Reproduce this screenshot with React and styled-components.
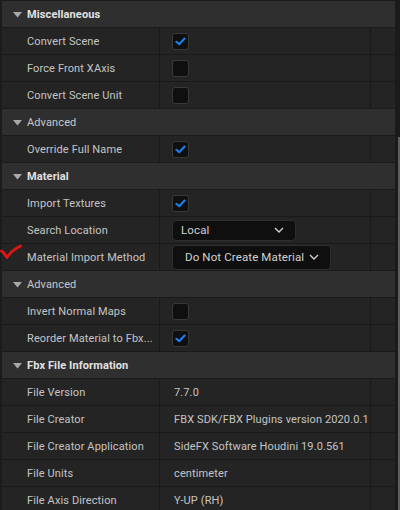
import React from "react"
import styled, { createGlobalStyle } from "styled-components"

const GlobalStyle = createGlobalStyle`
  html, body {
    margin: 0;
    padding: 0;
    background: #1b1b1b;
  }
  body {
    font-family: Roboto, "Noto Sans", sans-serif;
    font-size: 11px;
    letter-spacing: 0.12px;
  }
`

const sections = [
  {
    title: "Miscellaneous",
    bold: true,
    rows: [
      { label: "Convert Scene", check: true },
      { label: "Force Front XAxis", check: false },
      { label: "Convert Scene Unit", check: false },
    ],
  },
  {
    title: "Advanced",
    rows: [{ label: "Override Full Name", check: true }],
  },
  {
    title: "Material",
    bold: true,
    rows: [
      { label: "Import Textures", check: true },
      { label: "Search Location", combo: "Local", comboWidth: 124, comboHeight: 21 },
      {
        label: "Material Import Method",
        combo: "Do Not Create Material",
        comboWidth: 159,
        comboHeight: 25,
        marked: true,
      },
    ],
  },
  {
    title: "Advanced",
    rows: [
      { label: "Invert Normal Maps", check: false },
      { label: "Reorder Material to Fbx...", check: true },
    ],
  },
  {
    title: "Fbx File Information",
    bold: true,
    rows: [
      { label: "File Version", text: "7.7.0" },
      { label: "File Creator", text: "FBX SDK/FBX Plugins version 2020.0.1" },
      { label: "File Creator Application", text: "SideFX Software Houdini 19.0.561" },
      { label: "File Units", text: "centimeter" },
      { label: "File Axis Direction", text: "Y-UP (RH)" },
    ],
  },
]

const Arrow = () => (
  <svg width="9" height="6" viewBox="0 0 9 6">
    <path d="M0 0 L9 0 L4.5 5.5 Z" fill="#a8a8a8" />
  </svg>
)

const Chevron = () => (
  <svg width="10" height="6" viewBox="0 0 10 6">
    <path d="M1 1 L5 5 L9 1" fill="none" stroke="#d0d0d0" strokeWidth="1.4" />
  </svg>
)

const Tick = () => (
  <svg width="11" height="9" viewBox="0 0 11 9">
    <path d="M1.5 4.8 L4.2 7.2 L9.6 1.6" fill="none" stroke="#1f7ee8" strokeWidth="2.2" strokeLinecap="round" strokeLinejoin="round" />
  </svg>
)

const RedMark = () => (
  <Mark width="22" height="18" viewBox="0 0 22 18">
    <path d="M1.5 7 Q4 8.5 7 13.5 Q12 6 20.5 2" fill="none" stroke="#e01515" strokeWidth="2.8" strokeLinecap="round" strokeLinejoin="round" />
  </Mark>
)

const App = () => (
  <>
    <GlobalStyle />
    <Page>
      <Panel>
        {sections.map((section, i) => (
          <React.Fragment key={i}>
            <HeaderRow>
              <ArrowBox>
                <Arrow />
              </ArrowBox>
              <HeaderTitle $bold={section.bold}>{section.title}</HeaderTitle>
            </HeaderRow>
            {section.rows.map(row => (
              <Row key={row.label}>
                {row.marked && <RedMark />}
                <LabelCell>{row.label}</LabelCell>
                <ValueCell>
                  {row.check !== undefined && <CheckBox>{row.check && <Tick />}</CheckBox>}
                  {row.combo && (
                    <Combo $w={row.comboWidth} $h={row.comboHeight} $pad={row.comboHeight > 22 ? 12 : 8}>
                      <span>{row.combo}</span>
                      <Chevron />
                    </Combo>
                  )}
                  {row.text && <ValueText>{row.text}</ValueText>}
                </ValueCell>
                <ResetCell />
              </Row>
            ))}
          </React.Fragment>
        ))}
      </Panel>
      <ScrollTrack>
        <Thumb />
      </ScrollTrack>
    </Page>
  </>
)

export default App

const Page = styled.div`
  display: flex;
  width: 400px;
  height: 510px;
  overflow: hidden;
  background: #1b1b1b;
`

const Panel = styled.div`
  flex: 1;
  display: flex;
  flex-direction: column;
  padding-left: 2px;
  border-top: 1px solid #1a1a1a;
`

const HeaderRow = styled.div`
  display: flex;
  align-items: center;
  height: 26px;
  flex-shrink: 0;
  background: #2f2f2f;
  border-bottom: 1px solid #1a1a1a;
`

const ArrowBox = styled.div`
  width: 25px;
  display: flex;
  justify-content: center;
  padding-left: 5px;
  box-sizing: border-box;
  margin-top: 1px;
`

const HeaderTitle = styled.span`
  color: ${p => (p.$bold ? "#e2e2e2" : "#c8c8c8")};
  font-weight: ${p => (p.$bold ? 700 : 400)};
`

const Row = styled.div`
  position: relative;
  display: flex;
  height: 26px;
  flex-shrink: 0;
  background: #242424;
  border-bottom: 1px solid #1a1a1a;
`

const LabelCell = styled.div`
  width: 158px;
  box-sizing: border-box;
  padding-left: 25px;
  display: flex;
  align-items: center;
  color: #c4c4c4;
  border-right: 1px solid #1a1a1a;
  white-space: nowrap;
`

const ValueCell = styled.div`
  width: 211px;
  display: flex;
  align-items: center;
  padding-left: 12px;
  box-sizing: border-box;
  border-right: 1px solid #1a1a1a;
  overflow: hidden;
`

const ResetCell = styled.div`
  flex: 1;
`

const CheckBox = styled.div`
  width: 17px;
  height: 17px;
  box-sizing: border-box;
  border: 1px solid #383838;
  border-radius: 3px;
  background: #0f0f0f;
  display: flex;
  align-items: center;
  justify-content: center;
`

const Combo = styled.div`
  width: ${p => p.$w}px;
  height: ${p => p.$h}px;
  box-sizing: border-box;
  border: 1px solid #2e2e2e;
  border-radius: 4px;
  background: #0f0f0f;
  color: #d2d2d2;
  display: flex;
  align-items: center;
  justify-content: space-between;
  padding: 0 11px 0 ${p => p.$pad}px;
  font-size: 11.5px;
  flex-shrink: 0;
  white-space: nowrap;
`

const ValueText = styled.span`
  color: #c4c4c4;
  padding-left: 2px;
  white-space: nowrap;
`

const Mark = styled.svg`
  position: absolute;
  left: -2px;
  top: 0;
`

const ScrollTrack = styled.div`
  width: 5px;
  position: relative;
  background: #1b1b1b;
`

const Thumb = styled.div`
  position: absolute;
  right: 0;
  top: 137px;
  bottom: 0;
  width: 2px;
  background: #5e5e5e;
`
